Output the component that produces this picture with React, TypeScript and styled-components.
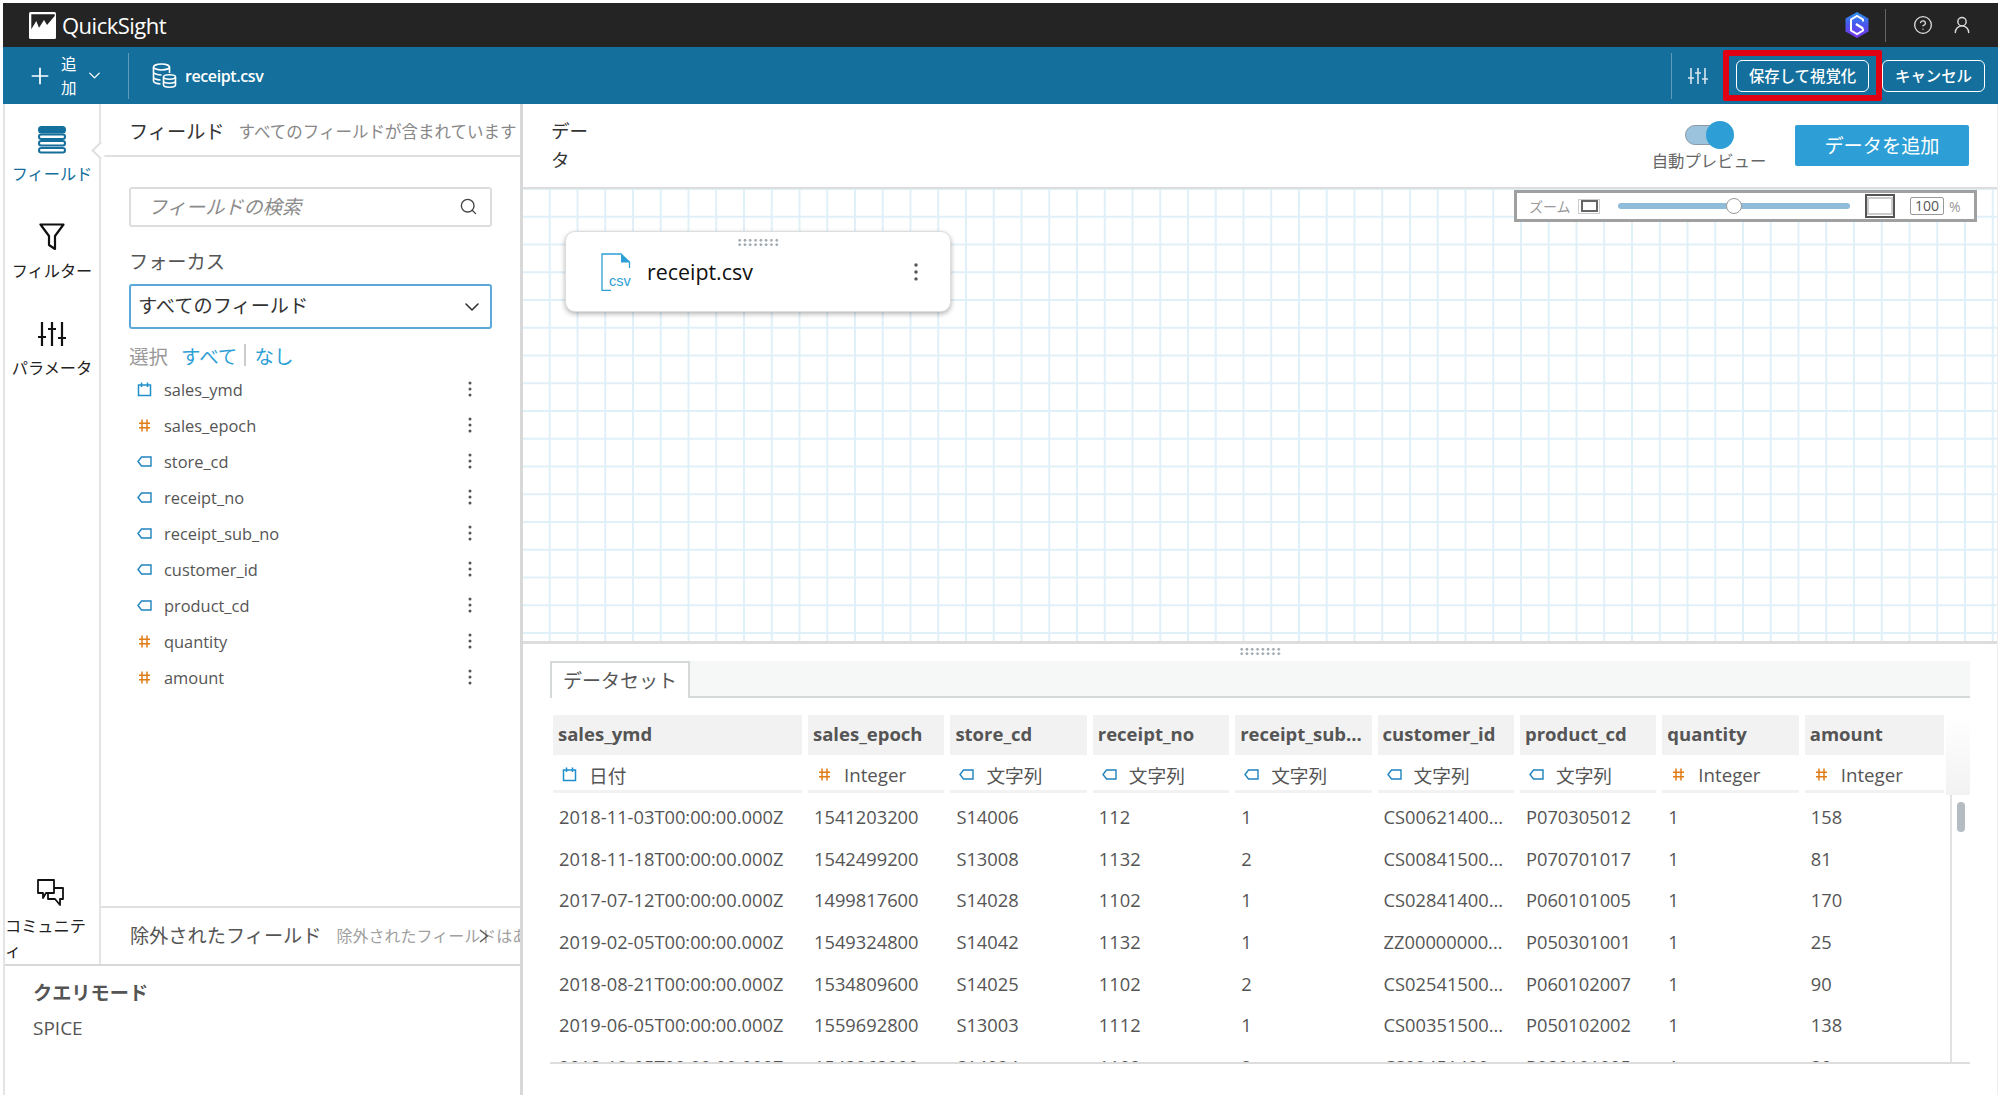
import styled, { createGlobalStyle } from "styled-components";
import { ChevronDown, CircleHelp, Plus, Search, UserRound } from "lucide-react";

const GlobalStyle = createGlobalStyle`
    html, body {
        margin: 0;
        padding: 0;
        background: #fff;
    }
    body {
        font-family: "Open Sans", "Noto Sans CJK JP", sans-serif;
        color: #444;
    }
    * {
        box-sizing: border-box;
    }
`;

const fields = [
    { name: "sales_ymd", kind: "date" },
    { name: "sales_epoch", kind: "num" },
    { name: "store_cd", kind: "str" },
    { name: "receipt_no", kind: "str" },
    { name: "receipt_sub_no", kind: "str" },
    { name: "customer_id", kind: "str" },
    { name: "product_cd", kind: "str" },
    { name: "quantity", kind: "num" },
    { name: "amount", kind: "num" },
];

const columns = [
    { title: "sales_ymd", kind: "date", type: "日付" },
    { title: "sales_epoch", kind: "num", type: "Integer" },
    { title: "store_cd", kind: "str", type: "文字列" },
    { title: "receipt_no", kind: "str", type: "文字列" },
    { title: "receipt_sub...", kind: "str", type: "文字列" },
    { title: "customer_id", kind: "str", type: "文字列" },
    { title: "product_cd", kind: "str", type: "文字列" },
    { title: "quantity", kind: "num", type: "Integer" },
    { title: "amount", kind: "num", type: "Integer" },
];

const rows = [
    ["2018-11-03T00:00:00.000Z", "1541203200", "S14006", "112", "1", "CS00621400...", "P070305012", "1", "158"],
    ["2018-11-18T00:00:00.000Z", "1542499200", "S13008", "1132", "2", "CS00841500...", "P070701017", "1", "81"],
    ["2017-07-12T00:00:00.000Z", "1499817600", "S14028", "1102", "1", "CS02841400...", "P060101005", "1", "170"],
    ["2019-02-05T00:00:00.000Z", "1549324800", "S14042", "1132", "1", "ZZ00000000...", "P050301001", "1", "25"],
    ["2018-08-21T00:00:00.000Z", "1534809600", "S14025", "1102", "2", "CS02541500...", "P060102007", "1", "90"],
    ["2019-06-05T00:00:00.000Z", "1559692800", "S13003", "1112", "1", "CS00351500...", "P050102002", "1", "138"],
    ["2018-12-05T00:00:00.000Z", "1543968000", "S14024", "1102", "2", "CS02451400...", "P080101005", "1", "30"],
];

function KindIcon({ kind }: { kind: string }) {
    if (kind === "date") {
        return (
            <svg width="15" height="15" viewBox="0 0 15 15" fill="none" stroke="#1f8fcb" strokeWidth="1.5">
                <rect x="1.5" y="3" width="12" height="10.5" />
                <path d="M4.5 0.500v4.500M10.500 0.500v4.500" />
            </svg>
        );
    }
    if (kind === "num") {
        return (
            <svg width="15" height="15" viewBox="0 0 15 15" fill="none" stroke="#e07b16" strokeWidth="1.5">
                <path d="M5 1.5v12M10 1.5v12M2 5.2h11M2 9.8h11" />
            </svg>
        );
    }
    return (
        <svg width="15" height="15" viewBox="0 0 15 15" fill="none" stroke="#1f83bd" strokeWidth="1.4">
            <path d="M14 3H4.5L1 7.5 4.5 12H14z" />
        </svg>
    );
}

function Kebab() {
    return (
        <svg width="4" height="16" viewBox="0 0 4 16" fill="#555">
            <circle cx="2" cy="2" r="1.5" />
            <circle cx="2" cy="8" r="1.5" />
            <circle cx="2" cy="14" r="1.5" />
        </svg>
    );
}

function App() {
    return (
        <>
            <GlobalStyle />
            <Page>
                <TopBar>
                    <Brand>
                        <svg width="27" height="27" viewBox="0 0 27 27">
                            <rect width="27" height="27" rx="1.5" fill="#fff" />
                            <path d="M2.300 2.300h23.400V4L18 13l-3-5-5 7.700L7.300 9l-5 8.300z" fill="#242424" />
                        </svg>
                        <BrandName>QuickSight</BrandName>
                    </Brand>
                    <TopActions>
                        <svg width="26" height="28" viewBox="0 0 26 28" fill="none">
                            <defs>
                                <linearGradient id="hexFill" x1="0.500" y1="0" x2="0.500" y2="1">
                                    <stop offset="0" stopColor="#2b93ee" />
                                    <stop offset="0.500" stopColor="#4a55ee" />
                                    <stop offset="1" stopColor="#7a35ee" />
                                </linearGradient>
                            </defs>
                            <path d="M13 1l11.500 6.500v13L13 27 1.500 20.500v-13z" fill="url(#hexFill)" />
                            <path d="M19 17.500v2L13 23l-6-3.500v-11L13 5l6 3.500v2" stroke="#fff" strokeWidth="2" />
                            <path d="M12 13l7 4.500" stroke="#fff" strokeWidth="2.400" />
                        </svg>
                        <TopDivider />
                        <CircleHelp size={20} strokeWidth={1.6} color="#ddd" />
                        <UserRound size={20} strokeWidth={1.7} color="#ddd" />
                    </TopActions>
                </TopBar>

                <ActionBar>
                    <AddButton>
                        <Plus size={26} strokeWidth={1.6} />
                        <AddLabel>追加</AddLabel>
                        <ChevronDown size={19} strokeWidth={1.7} />
                    </AddButton>
                    <BarDivider />
                    <FileName>
                        <svg width="25" height="25" viewBox="0 0 25 25" fill="none" stroke="#fff" strokeWidth="1.6">
                            <ellipse cx="9.500" cy="4" rx="8" ry="3" />
                            <path d="M1.500 4v14c0 1.600 3 3 7 3M1.500 9c0 1.600 3.500 3 8 3M1.500 14c0 1.600 3 3 7 3M17.500 4v6" />
                            <ellipse cx="17.500" cy="14" rx="6" ry="2.200" />
                            <path d="M11.500 14v8c0 1.200 2.700 2.200 6 2.200s6-1 6-2.200v-8M11.500 18c0 1.200 2.700 2.200 6 2.200s6-1 6-2.200" />
                        </svg>
                        receipt.csv
                    </FileName>
                    <BarActions>
                        <BarDivider />
                        <SlidersWrap>
                            <svg width="20" height="18" viewBox="0 0 20 18" fill="none" stroke="#d7e6ee" strokeWidth="1.6">
                                <path d="M3 1v16M10 1v16M17 1v16M0 11h6M7 6h6M14 12h6" />
                            </svg>
                        </SlidersWrap>
                        <SaveFrame>
                            <OutlineButton>保存して視覚化</OutlineButton>
                        </SaveFrame>
                        <OutlineButton>キャンセル</OutlineButton>
                    </BarActions>
                </ActionBar>

                <Body>
                    <LeftColumn>
                        <LeftUpper>
                            <Rail>
                                <RailItem $active>
                                    <RailIcon>
                                        <svg width="28" height="28" viewBox="0 0 28 28" fill="none" stroke="#146f9c" strokeWidth="2">
                                            <rect x="1" y="1" width="26" height="5.500" rx="2.500" fill="#146f9c" />
                                            <rect x="1" y="8.500" width="26" height="4.500" rx="2.200" />
                                            <rect x="1" y="15" width="26" height="4.500" rx="2.200" />
                                            <rect x="1" y="22" width="26" height="4.500" rx="2.200" />
                                        </svg>
                                    </RailIcon>
                                    <RailLabel $active>フィールド</RailLabel>
                                </RailItem>
                                <RailItem>
                                    <RailIcon>
                                        <svg width="26" height="28" viewBox="0 0 26 28" fill="none" stroke="#111" strokeWidth="2.200" strokeLinejoin="round">
                                            <path d="M1.500 1.500h23L16 13v13l-6-4v-9z" />
                                        </svg>
                                    </RailIcon>
                                    <RailLabel>フィルター</RailLabel>
                                </RailItem>
                                <RailItem>
                                    <RailIcon>
                                        <svg width="28" height="24" viewBox="0 0 28 24" fill="none" stroke="#111" strokeWidth="2.200">
                                            <path d="M4 0v24M14 0v24M24 0v24M0 15h8M10 7h8M20 16h8" />
                                        </svg>
                                    </RailIcon>
                                    <RailLabel>パラメータ</RailLabel>
                                </RailItem>
                                <CommunityItem>
                                    <svg width="28" height="28" viewBox="0 0 28 28" fill="none" stroke="#111" strokeWidth="1.800" strokeLinejoin="round">
                                        <path d="M1 1h16v13H9l-3 5v-5H1z" />
                                        <path d="M17 9h9v11h-3v6l-5-6h-7v-5" />
                                    </svg>
                                    <CommunityLabel>コミュニティ</CommunityLabel>
                                </CommunityItem>
                            </Rail>
                            <FieldPanel>
                                <PanelHeader>
                                    <PanelTitle>フィールド</PanelTitle>
                                    <PanelHint>すべてのフィールドが含まれています</PanelHint>
                                </PanelHeader>
                                <PanelNotch />
                                <PanelBody>
                                    <SearchBox>
                                        <SearchText>フィールドの検索</SearchText>
                                        <Search size={19} strokeWidth={1.7} color="#444" />
                                    </SearchBox>
                                    <FocusLabel>フォーカス</FocusLabel>
                                    <SelectBox>
                                        <SelectValue>すべてのフィールド</SelectValue>
                                        <ChevronDown size={24} strokeWidth={1.6} color="#333" />
                                    </SelectBox>
                                    <SelectRow>
                                        <SelectCaption>選択</SelectCaption>
                                        <SelectLink>すべて</SelectLink>
                                        <SelectSep />
                                        <SelectLink>なし</SelectLink>
                                    </SelectRow>
                                    <FieldList>
                                        {fields.map((field) => (
                                            <FieldRow key={field.name}>
                                                <KindIcon kind={field.kind} />
                                                <FieldName>{field.name}</FieldName>
                                                <Kebab />
                                            </FieldRow>
                                        ))}
                                    </FieldList>
                                </PanelBody>
                                <ExcludedRow>
                                    <ExcludedTitle>除外されたフィールド</ExcludedTitle>
                                    <ExcludedHint>除外されたフィールドはありません</ExcludedHint>
                                    <ExcludedToggle>
                                        <svg width="10" height="14" viewBox="0 0 10 14" fill="none" stroke="#555" strokeWidth="1.400">
                                            <path d="M1 1l7.500 6L1 13" />
                                        </svg>
                                    </ExcludedToggle>
                                </ExcludedRow>
                            </FieldPanel>
                        </LeftUpper>
                        <QueryPanel>
                            <QueryTitle>クエリモード</QueryTitle>
                            <QueryValue>SPICE</QueryValue>
                        </QueryPanel>
                    </LeftColumn>

                    <Main>
                        <MainHeader>
                            <MainTitle>データ</MainTitle>
                            <HeaderTools>
                                <ToggleGroup>
                                    <ToggleTrack>
                                        <ToggleKnob />
                                    </ToggleTrack>
                                    <ToggleLabel>自動プレビュー</ToggleLabel>
                                </ToggleGroup>
                                <PrimaryButton>データを追加</PrimaryButton>
                            </HeaderTools>
                        </MainHeader>

                        <Canvas>
                            <ZoomBar>
                                <ZoomCaption>ズーム</ZoomCaption>
                                <ZoomSmallIcon />
                                <ZoomTrack>
                                    <ZoomThumb />
                                </ZoomTrack>
                                <ZoomLargeIcon />
                                <ZoomInput>100</ZoomInput>
                                <ZoomPercent>%</ZoomPercent>
                            </ZoomBar>
                            <Node>
                                <Grip />
                                <svg width="32" height="38" viewBox="0 0 32 38" fill="none">
                                    <path d="M10 37.500H1V1h19l8.500 8v6" stroke="#2e9fd6" strokeWidth="1.300" />
                                    <path d="M20 1l8.500 8.500H20z" fill="#2e9fd6" />
                                    <CsvMark x="8" y="33">csv</CsvMark>
                                </svg>
                                <NodeName>receipt.csv</NodeName>
                                <NodeMenu>
                                    <Kebab />
                                </NodeMenu>
                            </Node>
                        </Canvas>

                        <BottomPane>
                            <HandleRow>
                                <Grip />
                            </HandleRow>
                            <TabBar>
                                <Tab>データセット</Tab>
                            </TabBar>
                            <TableWrap>
                                <TableGrid>
                                    {columns.map((col) => (
                                        <HeadCell key={col.title}>{col.title}</HeadCell>
                                    ))}
                                    {columns.map((col) => (
                                        <TypeCell key={col.title}>
                                            <KindIcon kind={col.kind} />
                                            {col.type}
                                        </TypeCell>
                                    ))}
                                    {rows.flat().map((value, i) => (
                                        <BodyCell key={i}>{value}</BodyCell>
                                    ))}
                                </TableGrid>
                                <HeadFade />
                                <ScrollLine />
                                <ScrollThumb />
                            </TableWrap>
                        </BottomPane>
                    </Main>
                </Body>
            </Page>
        </>
    );
}

export default App;

const Page = styled.div`
    width: 2000px;
    height: 1098px;
    padding: 3px 2px 3px 3px;
    display: flex;
    flex-direction: column;
    overflow: hidden;
`;

const TopBar = styled.div`
    height: 44px;
    flex: none;
    background: #242424;
    display: flex;
    align-items: center;
    justify-content: space-between;
    padding: 0 27px 0 26px;
`;

const Brand = styled.div`
    display: flex;
    align-items: center;
    gap: 6px;
`;

const BrandName = styled.span`
    color: #fff;
    font-size: 22px;
    letter-spacing: -0.5px;
`;

const TopActions = styled.div`
    display: flex;
    align-items: center;
    gap: 19px;
    margin-right: -1px;

    svg:first-child {
        margin-right: -4px;
    }
`;

const TopDivider = styled.div`
    width: 1px;
    height: 33px;
    background: #666;
    margin-right: 8px;
`;

const ActionBar = styled.div`
    height: 57px;
    flex: none;
    background: #146f9c;
    display: flex;
    align-items: center;
    color: #fff;
`;

const AddButton = styled.div`
    display: flex;
    align-items: center;
    padding-left: 24px;
    width: 125px;
    flex: none;
`;

const AddLabel = styled.div`
    width: 16px;
    font-size: 15.5px;
    line-height: 24px;
    margin: 0 8px 0 8px;
`;

const BarDivider = styled.div`
    width: 1px;
    height: 46px;
    background: #5d9cbc;
    flex: none;
`;

const FileName = styled.div`
    display: flex;
    align-items: center;
    gap: 8px;
    margin-left: 23px;
    font-size: 16px;
    font-weight: 600;
    letter-spacing: -0.4px;
`;

const BarActions = styled.div`
    margin-left: auto;
    display: flex;
    align-items: center;
    padding-right: 13px;
`;

const SlidersWrap = styled.div`
    display: flex;
    margin: 0 15px 0 16px;
`;

const SaveFrame = styled.div`
    width: 159px;
    height: 51px;
    border: 6px solid #e00012;
    display: flex;
    align-items: center;
    justify-content: center;
    border-radius: 2px;
`;

const OutlineButton = styled.div`
    height: 32px;
    padding: 0 12px;
    border: 1.5px solid #fff;
    border-radius: 6px;
    display: flex;
    align-items: center;
    font-size: 15.4px;
    font-weight: 500;
    color: #fff;
    white-space: nowrap;
`;

const Body = styled.div`
    flex: 1;
    display: flex;
    min-height: 0;
`;

const LeftColumn = styled.div`
    width: 520px;
    flex: none;
    display: flex;
    flex-direction: column;
    border-right: 3px solid #d8d8d8;
    border-left: 2px solid #e4e4e4;
`;

const LeftUpper = styled.div`
    flex: 1;
    display: flex;
    min-height: 0;
`;

const Rail = styled.div`
    width: 96px;
    flex: none;
    display: flex;
    flex-direction: column;
    align-items: center;
    padding-top: 17px;
    border-right: 2px solid #e4e4e4;
`;

const RailItem = styled.div<{ $active?: boolean }>`
    height: 97px;
    display: flex;
    flex-direction: column;
    align-items: center;
    gap: 4px;
`;

const RailIcon = styled.div`
    height: 38px;
    display: flex;
    align-items: center;
`;

const RailLabel = styled.div<{ $active?: boolean }>`
    font-size: 16.2px;
    line-height: 22px;
    color: ${(p) => (p.$active ? "#146f9c" : "#222")};
    white-space: nowrap;
`;

const CommunityItem = styled.div`
    margin-top: auto;
    display: flex;
    flex-direction: column;
    align-items: center;
    gap: 7px;
    width: 100%;

    svg {
        margin-left: -2px;
    }
`;

const CommunityLabel = styled.div`
    width: 84px;
    align-self: flex-start;
    font-size: 16.2px;
    line-height: 25px;
    color: #222;
    line-break: anywhere;
    word-break: break-all;
`;

const FieldPanel = styled.div`
    flex: 1;
    min-width: 0;
    position: relative;
    display: flex;
    flex-direction: column;
`;

const PanelHeader = styled.div`
    height: 53px;
    flex: none;
    display: flex;
    align-items: center;
    gap: 14px;
    padding: 2px 0 0 28px;
    border-bottom: 2px solid #e0e0e0;
    white-space: nowrap;
    overflow: hidden;
`;

const PanelTitle = styled.span`
    font-size: 19.2px;
    color: #333;
`;

const PanelHint = styled.span`
    font-size: 16.5px;
    color: #888;
`;

const PanelNotch = styled.div`
    position: absolute;
    left: -7px;
    top: 40px;
    width: 13px;
    height: 13px;
    background: #fff;
    border-left: 2px solid #e0e0e0;
    border-bottom: 2px solid #e0e0e0;
    transform: rotate(45deg);
`;

const PanelBody = styled.div`
    flex: 1;
    padding: 30px 28px 0 28px;
    min-height: 0;
`;

const SearchBox = styled.div`
    height: 40px;
    border: 2px solid #ddd;
    border-radius: 3px;
    display: flex;
    align-items: center;
    justify-content: space-between;
    padding: 0 12px 2px 17px;
`;

const SearchText = styled.span`
    font-size: 19.200px;
    font-style: italic;
    color: #8b8b8b;
`;

const FocusLabel = styled.div`
    font-size: 19.200px;
    line-height: 26px;
    color: #555;
    margin-top: 22px;
`;

const SelectBox = styled.div`
    height: 45px;
    margin-top: 9px;
    border: 2px solid #5aa9d8;
    border-radius: 3px;
    display: flex;
    align-items: center;
    justify-content: space-between;
    padding: 0 6px 0 7px;
    font-size: 19.200px;
    color: #333;
`;

const SelectValue = styled.span`
    margin-top: -4px;
`;

const SelectRow = styled.div`
    display: flex;
    align-items: center;
    height: 28px;
    margin-top: 12px;
    font-size: 19.500px;
`;

const SelectCaption = styled.span`
    color: #999;
    margin-right: 13px;
`;

const SelectLink = styled.span`
    color: #2e9fd6;
`;

const SelectSep = styled.span`
    width: 2px;
    height: 22px;
    background: #ccc;
    margin: 0 8px 0 7px;
`;

const FieldList = styled.div`
    margin-top: 2px;
`;

const FieldRow = styled.div`
    height: 36px;
    display: flex;
    align-items: center;
    padding: 0 20px 0 8px;
`;

const FieldName = styled.span`
    flex: 1;
    margin-left: 12px;
    font-size: 16.400px;
    color: #555;
`;

const ExcludedRow = styled.div`
    position: relative;
    height: 58px;
    flex: none;
    border-top: 2px solid #e0e0e0;
    padding: 0 0 2px 29px;
    display: flex;
    align-items: center;
    gap: 15px;
    white-space: nowrap;
    overflow: hidden;
`;

const ExcludedTitle = styled.span`
    flex: none;
    font-size: 19.200px;
    color: #555;
`;

const ExcludedHint = styled.span`
    flex: 1;
    min-width: 0;
    overflow: hidden;
    font-size: 16px;
    color: #a0a0a0;
`;

const ExcludedToggle = styled.div`
    position: absolute;
    left: 378px;
    top: 21px;
    display: flex;
`;

const QueryPanel = styled.div`
    height: 131px;
    flex: none;
    border-top: 2px solid #d8d8d8;
    padding: 13px 0 0 28px;
`;

const QueryTitle = styled.div`
    font-size: 19.200px;
    line-height: 28px;
    font-weight: 700;
    color: #555;
`;

const QueryValue = styled.div`
    font-size: 19px;
    line-height: 26px;
    margin-top: 8px;
    color: #555;
`;

const Main = styled.div`
    flex: 1;
    min-width: 0;
    display: flex;
    flex-direction: column;
    border-right: 1px solid #eee;
`;

const MainHeader = styled.div`
    height: 85px;
    flex: none;
    display: flex;
    justify-content: space-between;
    padding: 12px 28px 0 28px;
    border-bottom: 2px solid #ddd;
`;

const MainTitle = styled.div`
    width: 40px;
    font-size: 18.500px;
    line-height: 29px;
    color: #333;
`;

const HeaderTools = styled.div`
    display: flex;
    gap: 29px;
`;

const ToggleGroup = styled.div`
    width: 114px;
    display: flex;
    flex-direction: column;
    align-items: center;
`;

const ToggleTrack = styled.div`
    position: relative;
    width: 48px;
    height: 20px;
    margin-top: 9px;
    border-radius: 10px;
    background: #9cc3dd;
    border: 1px solid #8a9aa6;
`;

const ToggleKnob = styled.div`
    position: absolute;
    right: -2px;
    top: -5px;
    width: 28px;
    height: 28px;
    border-radius: 50%;
    background: #2e9fd6;
`;

const ToggleLabel = styled.div`
    margin-top: 5px;
    font-size: 16.400px;
    line-height: 22px;
    color: #666;
    white-space: nowrap;
`;

const PrimaryButton = styled.div`
    width: 174px;
    height: 41px;
    margin-top: 9px;
    padding-bottom: 2px;
    background: #2e9fd6;
    border-radius: 2px;
    color: #fff;
    font-size: 19.200px;
    display: flex;
    align-items: center;
    justify-content: center;
`;

const Canvas = styled.div`
    position: relative;
    flex: 1;
    min-height: 0;
    background-color: #fff;
    background-image: linear-gradient(to right, #e0f0f9 2px, transparent 2px),
        linear-gradient(to bottom, #e0f0f9 2px, transparent 2px);
    background-size: 27.750px 27.750px;
    background-position: -2px -1px;
`;

const ZoomBar = styled.div`
    position: absolute;
    top: 1px;
    right: 20px;
    width: 463px;
    height: 32px;
    background: #fff;
    border: 3px solid #a0a0a0;
    display: flex;
    align-items: center;
    padding-left: 12px;
`;

const ZoomCaption = styled.span`
    font-size: 14px;
    color: #999;
    width: 49px;
`;

const ZoomSmallIcon = styled.div`
    width: 22px;
    height: 15px;
    border: 1px solid #ccc;
    display: flex;
    align-items: center;
    justify-content: center;

    &::after {
        content: "";
        width: 13px;
        height: 8px;
        border: 2px solid #666;
    }
`;

const ZoomTrack = styled.div`
    position: relative;
    width: 232px;
    height: 6px;
    margin-left: 18px;
    border-radius: 3px;
    background: #8fbcd8;
`;

const ZoomThumb = styled.div`
    position: absolute;
    left: 108px;
    top: -5px;
    width: 16px;
    height: 16px;
    border-radius: 50%;
    background: #fff;
    border: 1px solid #999;
`;

const ZoomLargeIcon = styled.div`
    width: 30px;
    height: 24px;
    margin-left: 15px;
    border: 2px solid #555;
    display: flex;
    align-items: center;
    justify-content: center;

    &::after {
        content: "";
        width: 22px;
        height: 14px;
        border: 2px solid #ccc;
    }
`;

const ZoomInput = styled.div`
    width: 34px;
    height: 18px;
    margin-left: 15px;
    border: 1px solid #999;
    border-radius: 2px;
    font-size: 14px;
    line-height: 16px;
    text-align: center;
    color: #555;
`;

const ZoomPercent = styled.span`
    margin-left: 5px;
    font-size: 14px;
    color: #999;
`;

const Node = styled.div`
    position: absolute;
    left: 42px;
    top: 42px;
    width: 386px;
    height: 81px;
    background: #fff;
    border-radius: 10px;
    border: 1px solid #ddd;
    box-shadow: 0 2px 5px rgba(0, 0, 0, 0.3);
    display: flex;
    align-items: center;
    padding-left: 35px;
`;

const CsvMark = styled.text`
    font-family: "Liberation Sans", sans-serif;
    font-size: 14.500px;
    fill: #2e9fd6;
`;

const NodeName = styled.span`
    margin-left: 14px;
    font-size: 21.400px;
    color: #111;
`;

const NodeMenu = styled.div`
    margin-left: auto;
    margin-right: 32px;
    display: flex;
    transform: scale(1.15);
`;

const Grip = styled.div`
    position: absolute;
    top: 6px;
    left: 50%;
    transform: translateX(-50%);
    width: 42px;
    height: 8px;
    background-image: radial-gradient(circle, #9ea7ae 1.300px, transparent 1.400px);
    background-size: 5.300px 4.500px;
`;

const BottomPane = styled.div`
    height: 454px;
    flex: none;
    border-top: 3px solid #ddd;
    padding: 0 27px 0 27px;
    background: #fff;
`;

const HandleRow = styled.div`
    position: relative;
    height: 17px;

    ${Grip} {
        top: 3px;
    }
`;

const TabBar = styled.div`
    height: 37px;
    background: #f6f7f7;
    border-bottom: 2px solid #d5d9da;
    display: flex;
`;

const Tab = styled.div`
    width: 140px;
    height: 37px;
    padding-bottom: 2px;
    background: #fff;
    border: 2px solid #d5d9da;
    border-bottom: none;
    display: flex;
    align-items: center;
    justify-content: center;
    font-size: 19px;
    color: #555;
`;

const TableWrap = styled.div`
    position: relative;
    height: 349px;
    margin-top: 17px;
    padding-left: 3px;
    overflow: hidden;
    border-bottom: 2px solid #ddd;
`;

const TableGrid = styled.div`
    display: grid;
    grid-template-columns: 249px repeat(7, 136.400px) 139px;
    grid-template-rows: 40px 40px repeat(7, 41.600px);
    column-gap: 6px;
    width: max-content;
`;

const HeadCell = styled.div`
    background: #f2f2f2;
    display: flex;
    align-items: center;
    padding: 0 0 3px 5px;
    font-size: 18.500px;
    font-weight: 700;
    color: #555;
    white-space: nowrap;
    overflow: hidden;
`;

const TypeCell = styled.div`
    height: 38px;
    display: flex;
    align-items: center;
    gap: 12px;
    padding: 4px 0 0 9px;
    border-bottom: 3px solid #f2f2f2;
    font-size: 18.700px;
    color: #555;
`;

const BodyCell = styled.div`
    display: flex;
    align-items: center;
    padding: 2px 0 0 6px;
    font-size: 18.300px;
    color: #555;
    white-space: nowrap;
    overflow: hidden;
`;

const HeadFade = styled.div`
    position: absolute;
    right: 0;
    top: 0;
    width: 24px;
    height: 80px;
    background: linear-gradient(to bottom, #fff, #f2f2f2);
`;

const ScrollLine = styled.div`
    position: absolute;
    right: 18px;
    top: 80px;
    bottom: 0;
    width: 2px;
    background: #e2e2e2;
`;

const ScrollThumb = styled.div`
    position: absolute;
    right: 5px;
    top: 87px;
    width: 8px;
    height: 30px;
    border-radius: 4px;
    background: #b4bcc2;
`;
